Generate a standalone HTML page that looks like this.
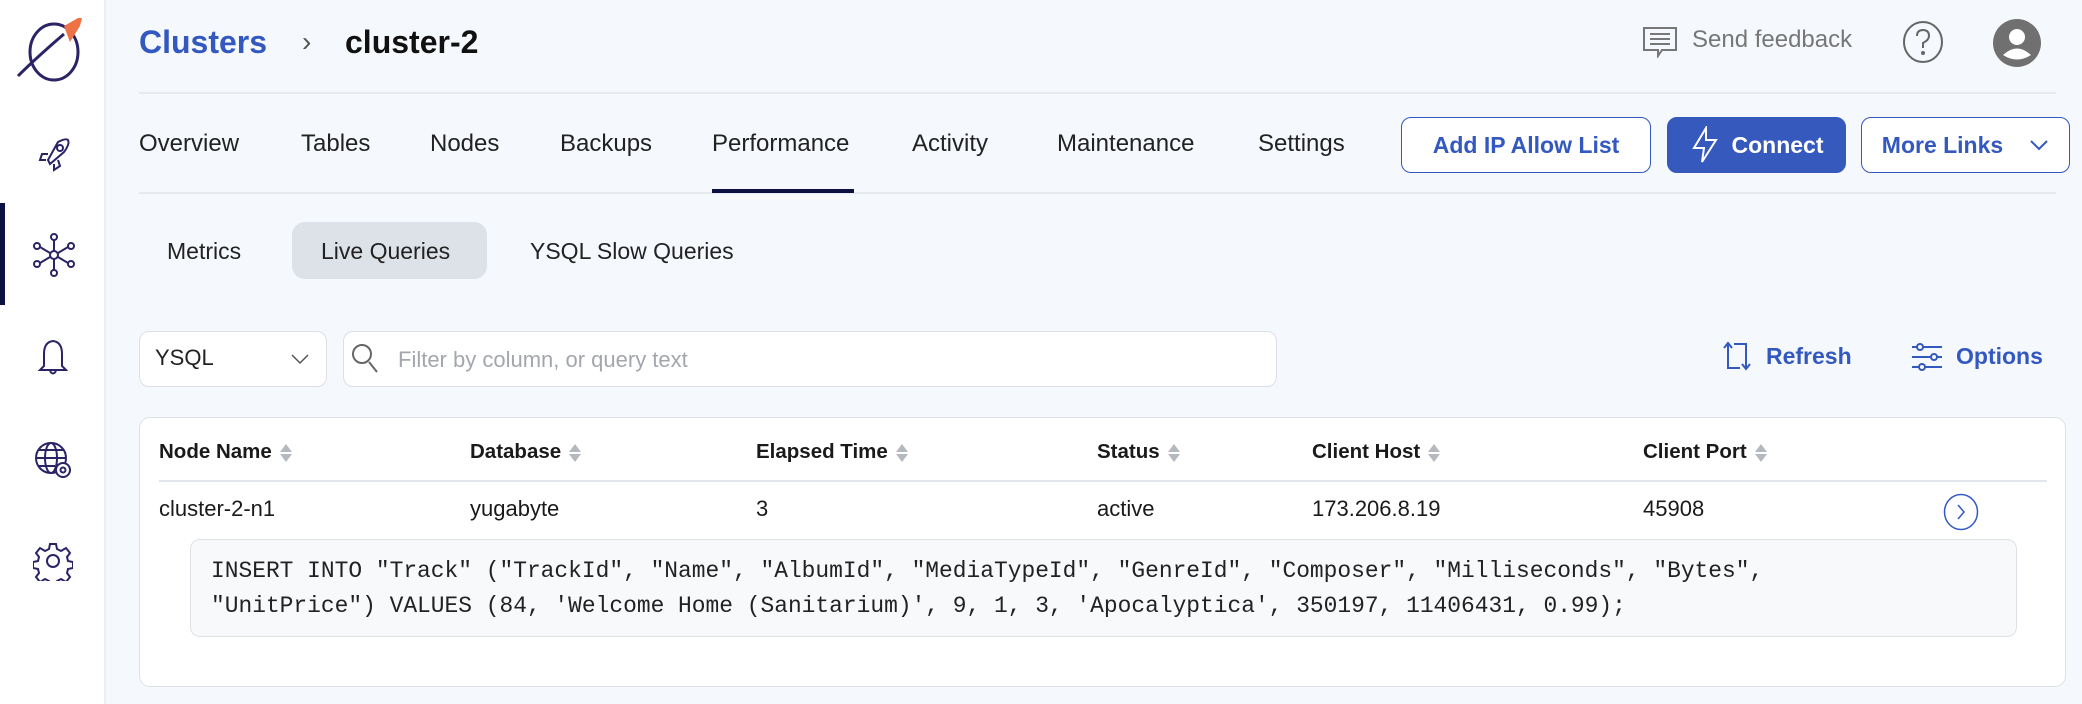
<!DOCTYPE html>
<html><head><meta charset="utf-8"><style>
*{margin:0;padding:0;box-sizing:border-box}
body{width:2082px;height:704px;overflow:hidden;background:#f5f8fc;font-family:"Liberation Sans",sans-serif;color:#111;position:relative}
.a{position:absolute;white-space:nowrap}
.side{position:absolute;left:0;top:0;width:106px;height:704px;background:#fff;border-right:2px solid #eceef2}
.tab{position:absolute;top:130px;font-size:24px;color:#222}
.btn{position:absolute;top:117px;height:56px;border:1.5px solid #3358bf;border-radius:10px;color:#3358bf;font-size:23px;font-weight:bold;display:flex;align-items:center;justify-content:center;background:#fff}
.th{position:absolute;top:440px;font-size:20.5px;font-weight:bold;color:#1a1a1a}
.td{position:absolute;top:496px;font-size:22px;color:#1a1a1a}
.sort{display:inline-block;vertical-align:middle;margin-left:8px;width:12px;height:20px;position:relative}
.sort:before{content:"";position:absolute;left:0;top:1px;border-left:6px solid transparent;border-right:6px solid transparent;border-bottom:8px solid #b4b8bf}
.sort:after{content:"";position:absolute;left:0;top:11px;border-left:6px solid transparent;border-right:6px solid transparent;border-top:8px solid #b4b8bf}
</style></head><body>
<div class="side">
<svg class="a" style="left:14px;top:16px" width="76" height="66" viewBox="0 0 76 66"><ellipse cx="40" cy="36" rx="24" ry="28" fill="none" stroke="#2a2466" stroke-width="3"/><path d="M4 60 Q22 42 50 18" fill="none" stroke="#2a2466" stroke-width="3"/><path d="M50 10 L64 2 L68 2 L66 10 L56 26 Z" fill="#ef7245"/></svg>
<svg class="a" style="left:36px;top:136px" width="36" height="36" viewBox="0 0 36 36" fill="none" stroke="#2a2466" stroke-width="2"><path d="M12 24 L22 6 Q30 2 32 4 Q34 8 28 16 L14 28 Z"/><circle cx="24" cy="12" r="3"/><path d="M12 18 L6 18 L4 24 L10 24 M18 28 L18 34 L24 30 L22 24"/></svg>
<div class="a" style="left:0;top:203px;width:5px;height:102px;background:#0b1140"></div>
<svg class="a" style="left:32px;top:232px" width="44" height="46" viewBox="0 0 44 46" fill="none" stroke="#2a2466" stroke-width="2"><circle cx="22" cy="23" r="4"/><circle cx="22" cy="5" r="3"/><circle cx="22" cy="41" r="3"/><circle cx="5" cy="14" r="3"/><circle cx="39" cy="14" r="3"/><circle cx="5" cy="32" r="3"/><circle cx="39" cy="32" r="3"/><path d="M22 8V19M22 27V38M8 15L18 21M36 15L26 21M8 31L18 25M36 31L26 25"/></svg>
<svg class="a" style="left:36px;top:338px" width="34" height="38" viewBox="0 0 34 38" fill="none" stroke="#2a2466" stroke-width="2"><path d="M17 3 Q8 4 8 16 L8 28 L4 32 L30 32 L26 28 L26 16 Q26 4 17 3Z"/><path d="M14 33 Q17 38 20 33"/></svg>
<svg class="a" style="left:33px;top:440px" width="42" height="42" viewBox="0 0 42 42" fill="none" stroke="#2a2466" stroke-width="2"><circle cx="18" cy="18" r="15"/><ellipse cx="18" cy="18" rx="6" ry="15"/><path d="M3 18H33M6 10H30M6 26H22"/><circle cx="30" cy="30" r="7" fill="#fff"/><circle cx="30" cy="30" r="2.5"/></svg>
<svg class="a" style="left:33px;top:541px" width="40" height="40" viewBox="0 0 40 40" fill="none" stroke="#2a2466" stroke-width="2"><circle cx="20" cy="20" r="6"/><path d="M17 3h6l1 5 4 2 5-3 4 5-3 4 1 4 5 1v6l-5 1-1 4 3 4-4 5-5-3-4 2-1 5h-6l-1-5-4-2-5 3-4-5 3-4-1-4-5-1v-6l5-1 1-4-3-4 4-5 5 3 4-2z"/></svg>
</div>
<div class="a" style="left:139px;top:24px;font-size:32px;font-weight:bold;color:#3358bf">Clusters</div>
<div class="a" style="left:302px;top:26px;font-size:28px;color:#555">›</div>
<div class="a" style="left:345px;top:24px;font-size:32px;font-weight:bold;color:#111">cluster-2</div>
<svg class="a" style="left:1642px;top:26px" width="36" height="32" viewBox="0 0 36 32" fill="none" stroke="#777" stroke-width="2"><path d="M2 2H34V24H20L16 30V24H2Z"/><path d="M8 8H28M8 13H28M8 18H28"/></svg>
<div class="a" style="left:1692px;top:26px;font-size:24px;color:#777">Send feedback</div>
<svg class="a" style="left:1902px;top:20px" width="42" height="44" viewBox="0 0 42 44" fill="none" stroke="#666" stroke-width="2"><ellipse cx="21" cy="22" rx="19" ry="20"/><path d="M15 16 Q15 10 21 10 Q27 10 27 16 Q27 20 21 23 L21 28"/><circle cx="21" cy="33" r="1" fill="#666"/></svg>
<svg class="a" style="left:1992px;top:18px" width="50" height="50" viewBox="0 0 50 50"><circle cx="25" cy="25" r="24" fill="#707070"/><circle cx="25" cy="19" r="8" fill="#fff"/><path d="M11 37 Q25 24 39 37 Q25 46 11 37Z" fill="#fff"/></svg>
<div class="a" style="left:139px;top:92px;width:1917px;height:2px;background:#e6e9ee"></div>
<div class="tab" style="left:139px">Overview</div>
<div class="tab" style="left:301px">Tables</div>
<div class="tab" style="left:430px">Nodes</div>
<div class="tab" style="left:560px">Backups</div>
<div class="tab" style="left:712px">Performance</div>
<div class="tab" style="left:912px">Activity</div>
<div class="tab" style="left:1057px">Maintenance</div>
<div class="tab" style="left:1258px">Settings</div>
<div class="a" style="left:139px;top:192px;width:1917px;height:2px;background:#e6e9ee"></div>
<div class="a" style="left:712px;top:189px;width:142px;height:4px;background:#0b1140"></div>
<div class="btn" style="left:1401px;width:250px">Add IP Allow List</div>
<div class="btn" style="left:1667px;width:179px;background:#3559bd;color:#fff;border-color:#3559bd"><svg width="30" height="38" viewBox="0 0 30 38" fill="none" stroke="#fff" stroke-width="2" style="margin-right:12px"><path d="M16 2L4 22H14L12 36L26 14H16Z"/></svg>Connect</div>
<div class="btn" style="left:1861px;width:209px">More Links<svg width="20" height="12" viewBox="0 0 20 12" fill="none" stroke="#3358bf" stroke-width="2" style="margin-left:26px"><path d="M2 2L10 10L18 2"/></svg></div>
<div class="a" style="left:292px;top:222px;width:195px;height:57px;background:#dde1e8;border-radius:13px"></div>
<div class="a" style="left:167px;top:238px;font-size:23px;color:#222">Metrics</div>
<div class="a" style="left:321px;top:238px;font-size:23px;color:#222">Live Queries</div>
<div class="a" style="left:530px;top:238px;font-size:23px;color:#222">YSQL Slow Queries</div>
<div class="a" style="left:139px;top:331px;width:188px;height:56px;background:#fff;border:1.5px solid #dcdfe4;border-radius:10px"></div>
<div class="a" style="left:155px;top:345px;font-size:22px;color:#222">YSQL</div>
<svg class="a" style="left:290px;top:353px" width="20" height="12" viewBox="0 0 20 12" fill="none" stroke="#555" stroke-width="1.5"><path d="M2 2L10 10L18 2"/></svg>
<div class="a" style="left:343px;top:331px;width:934px;height:56px;background:#fff;border:1.5px solid #dcdfe4;border-radius:10px"></div>
<svg class="a" style="left:350px;top:342px" width="30" height="32" viewBox="0 0 30 32" fill="none" stroke="#666" stroke-width="2"><circle cx="12" cy="12" r="9"/><path d="M19 20L27 30"/></svg>
<div class="a" style="left:398px;top:347px;font-size:22px;color:#a3a7ad">Filter by column, or query text</div>
<svg class="a" style="left:1720px;top:340px" width="34" height="32" viewBox="0 0 34 32" fill="none" stroke="#3358bf" stroke-width="2"><path d="M4 8L8 3L12 8M8 3V28H20M30 24L26 29L22 24M26 29V4H14"/></svg>
<div class="a" style="left:1766px;top:343px;font-size:23px;font-weight:bold;color:#3358bf">Refresh</div>
<svg class="a" style="left:1910px;top:342px" width="34" height="30" viewBox="0 0 34 30" fill="none" stroke="#3358bf" stroke-width="2"><path d="M2 5H32M2 15H32M2 25H32"/><circle cx="10" cy="5" r="3" fill="#f5f8fc"/><circle cx="24" cy="15" r="3" fill="#f5f8fc"/><circle cx="12" cy="25" r="3" fill="#f5f8fc"/></svg>
<div class="a" style="left:1956px;top:343px;font-size:23px;font-weight:bold;color:#3358bf">Options</div>
<div class="a" style="left:139px;top:417px;width:1927px;height:270px;background:#fff;border:1.5px solid #dde0e5;border-radius:11px"></div>
<div class="th" style="left:159px">Node Name<span class="sort"></span></div>
<div class="th" style="left:470px">Database<span class="sort"></span></div>
<div class="th" style="left:756px">Elapsed Time<span class="sort"></span></div>
<div class="th" style="left:1097px">Status<span class="sort"></span></div>
<div class="th" style="left:1312px">Client Host<span class="sort"></span></div>
<div class="th" style="left:1643px">Client Port<span class="sort"></span></div>
<div class="a" style="left:159px;top:480px;width:1888px;height:2px;background:#e3e6ea"></div>
<div class="td" style="left:159px">cluster-2-n1</div>
<div class="td" style="left:470px">yugabyte</div>
<div class="td" style="left:756px">3</div>
<div class="td" style="left:1097px">active</div>
<div class="td" style="left:1312px">173.206.8.19</div>
<div class="td" style="left:1643px">45908</div>
<svg class="a" style="left:1943px;top:493px" width="36" height="38" viewBox="0 0 36 38" fill="none" stroke="#3358bf" stroke-width="1.5"><ellipse cx="18" cy="19" rx="16.5" ry="17.5"/><path d="M15 12L21 19L15 26"/></svg>
<div class="a" style="left:190px;top:539px;width:1827px;height:98px;background:#f7f9fb;border:1.5px solid #dde0e5;border-radius:10px"></div>
<div class="a" style="left:211px;top:554px;font-family:'Liberation Mono',monospace;font-size:22.9px;line-height:35px;color:#222;white-space:pre">INSERT INTO "Track" ("TrackId", "Name", "AlbumId", "MediaTypeId", "GenreId", "Composer", "Milliseconds", "Bytes",
"UnitPrice") VALUES (84, 'Welcome Home (Sanitarium)', 9, 1, 3, 'Apocalyptica', 350197, 11406431, 0.99);</div>
</body></html>
